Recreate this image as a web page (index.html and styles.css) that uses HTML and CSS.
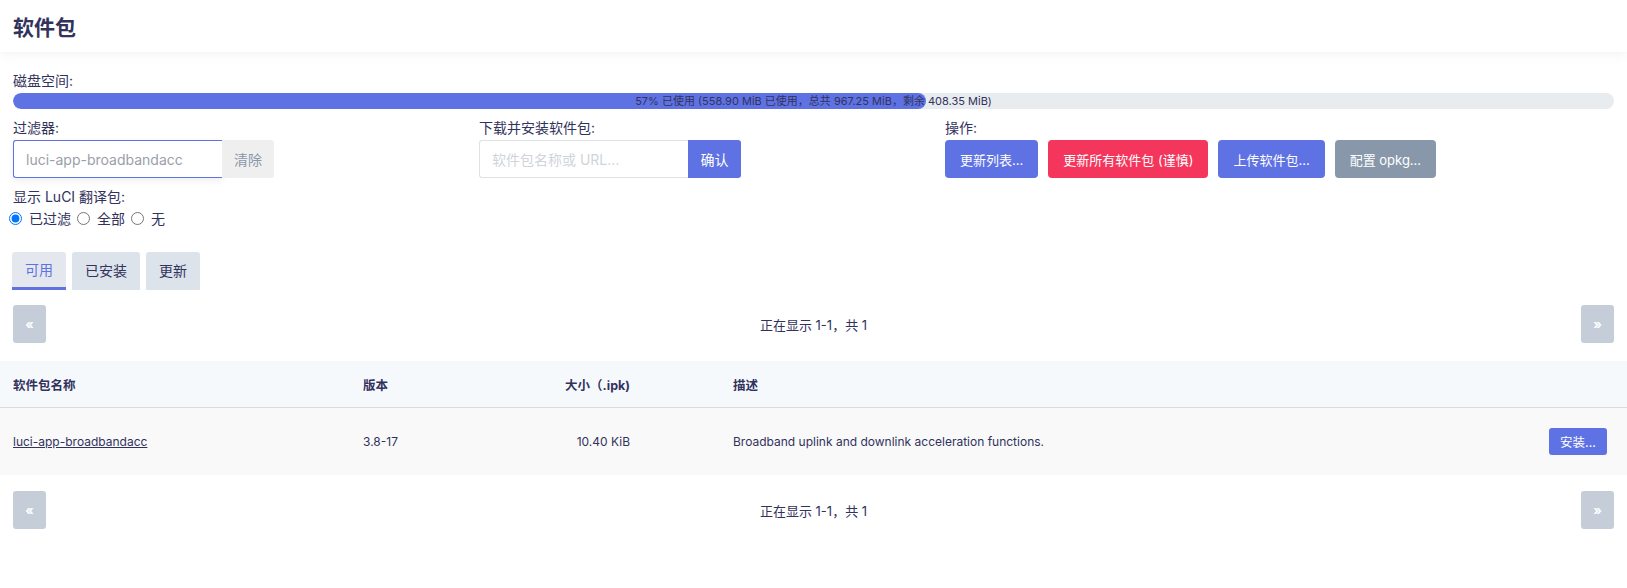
FILE: index.html
```html
<!DOCTYPE html>
<html lang="zh-CN">
<head>
    <meta charset="UTF-8">
    <meta name="viewport" content="width=device-width, initial-scale=1.0">
    <title>软件包</title>
    <link rel="stylesheet" href="styles.css">
</head>
<body>

<header class="topbar">
    <h2>软件包</h2>
</header>

<main class="content">
    <section class="disk">
        <div class="field-label">磁盘空间:</div>
        <div class="disk-bar">
            <div class="disk-fill" style="width: 57%"></div>
            <span class="disk-text">57% 已使用 (558.90 MiB 已使用，总共 967.25 MiB，剩余 408.35 MiB)</span>
        </div>
    </section>

    <section class="controls">
        <div class="control">
            <div class="field-label">过滤器:</div>
            <div class="input-group">
                <input type="text" class="text-input focused" placeholder="luci-app-broadbandacc">
                <button class="btn btn-clear">清除</button>
            </div>
        </div>
        <div class="control">
            <div class="field-label">下载并安装软件包:</div>
            <div class="input-group">
                <input type="text" class="text-input" placeholder="软件包名称或 URL...">
                <button class="btn btn-confirm">确认</button>
            </div>
        </div>
        <div class="control">
            <div class="field-label">操作:</div>
            <div class="actions">
                <button class="btn btn-primary">更新列表...</button>
                <button class="btn btn-danger">更新所有软件包 (谨慎)</button>
                <button class="btn btn-primary">上传软件包...</button>
                <button class="btn btn-neutral">配置 opkg...</button>
            </div>
        </div>
    </section>

    <section class="translations">
        <div class="field-label">显示 LuCI 翻译包:</div>
        <div class="radios">
            <label><input type="radio" name="i18n" checked>已过滤</label>
            <label><input type="radio" name="i18n">全部</label>
            <label><input type="radio" name="i18n">无</label>
        </div>
    </section>

    <ul class="tabs">
        <li class="tab active">可用</li>
        <li class="tab">已安装</li>
        <li class="tab">更新</li>
    </ul>

    <div class="pager">
        <button class="pager-btn">&laquo;</button>
        <span class="pager-text">正在显示 1-1，共 1</span>
        <button class="pager-btn">&raquo;</button>
    </div>
</main>

<table class="packages">
    <thead>
        <tr>
            <th class="col-name">软件包名称</th>
            <th class="col-version">版本</th>
            <th class="col-size">大小（.ipk)</th>
            <th class="col-desc">描述</th>
            <th class="col-action"></th>
        </tr>
    </thead>
    <tbody>
        <tr>
            <td class="col-name"><a href="#">luci-app-broadbandacc</a></td>
            <td class="col-version">3.8-17</td>
            <td class="col-size">10.40 KiB</td>
            <td class="col-desc">Broadband uplink and downlink acceleration functions.</td>
            <td class="col-action"><button class="btn btn-install">安装...</button></td>
        </tr>
    </tbody>
</table>

<div class="pager pager-bottom">
    <button class="pager-btn">&laquo;</button>
    <span class="pager-text">正在显示 1-1，共 1</span>
    <button class="pager-btn">&raquo;</button>
</div>

</body>
</html>
```

FILE: styles.css
```css
body {
    margin: 0;
    font-family: Inter, "Noto Sans CJK SC", sans-serif;
    font-size: 14px;
    color: #32325d;
    background-color: #ffffff;
}
.topbar {
    height: 52px;
    display: flex;
    align-items: center;
    padding: 0 13px;
    box-shadow: 0 2px 10px rgba(136, 152, 170, 0.12);
}
.topbar h2 {
    margin: 0;
    font-size: 21px;
    font-weight: 700;
    color: #32325d;
}
.content {
    padding: 19px 13px 0;
}
.field-label {
    line-height: 20px;
    font-size: 14px;
}
.disk-bar {
    position: relative;
    margin-top: 2px;
    height: 16px;
    border-radius: 8px;
    background-color: #e9ecef;
    overflow: hidden;
}
.disk-fill {
    height: 100%;
    background-color: #5e72e4;
    border-radius: 8px;
}
.disk-text {
    position: absolute;
    left: 0;
    right: 0;
    top: 0;
    text-align: center;
    font-size: 11px;
    line-height: 16px;
    color: #32325d;
}
.controls {
    display: grid;
    grid-template-columns: 466px 466px 1fr;
    margin-top: 9px;
}
.input-group {
    display: flex;
    margin-top: 2px;
    height: 38px;
}
.text-input {
    width: 209px;
    box-sizing: border-box;
    border: 1px solid #dee2e6;
    border-right: none;
    border-radius: 3px 0 0 3px;
    padding: 0 12px;
    font-family: inherit;
    font-size: 14px;
    color: #32325d;
    outline: none;
}
.text-input::placeholder {
    color: #d0d4da;
}
.text-input.focused {
    border-color: #5e72e4;
    box-shadow: 0 3px 6px rgba(50, 50, 93, 0.08);
}
.text-input.focused::placeholder {
    color: #9aa0a8;
}
.btn {
    border: none;
    font-family: inherit;
    cursor: pointer;
    color: #ffffff;
}
.btn-clear {
    width: 52px;
    background-color: #efefef;
    color: #8898aa;
    font-size: 14px;
    border-radius: 0 3px 3px 0;
}
.btn-confirm {
    width: 53px;
    background-color: #5e72e4;
    font-size: 14px;
    border-radius: 0 3px 3px 0;
}
.actions {
    display: flex;
    gap: 10px;
    margin-top: 2px;
}
.actions .btn {
    height: 38px;
    padding: 0 15px;
    font-size: 13px;
    border-radius: 4px;
}
.btn-primary {
    background-color: #5e72e4;
}
.btn-danger {
    background-color: #f5365c;
}
.btn-neutral {
    background-color: #8898aa;
}
.translations {
    margin-top: 9px;
}
.radios {
    display: flex;
    align-items: center;
    height: 20px;
    margin-top: 1px;
    margin-left: -4px;
}
.radios label {
    display: inline-flex;
    align-items: center;
    margin-right: 6px;
}
.radios input {
    width: 13px;
    height: 13px;
    margin: 0 7px 0 0;
}
.tabs {
    display: flex;
    gap: 6px;
    list-style: none;
    margin: 24px 0 0 -1px;
    padding: 0;
}
.tab {
    height: 38px;
    line-height: 38px;
    padding: 0 13px;
    box-sizing: border-box;
    background-color: #dce3ea;
    border-radius: 3px 3px 0 0;
    color: #32325d;
}
.tab.active {
    background-color: #e4e8ee;
    color: #5e72e4;
    border-bottom: 3px solid #5e72e4;
    line-height: 36px;
}
.pager {
    display: flex;
    justify-content: space-between;
    align-items: center;
    margin-top: 15px;
    height: 38px;
}
.pager-btn {
    width: 33px;
    height: 38px;
    border: none;
    border-radius: 3px;
    background-color: #c5ced8;
    color: #ffffff;
    font-size: 13px;
    font-weight: 700;
    font-family: inherit;
}
.pager-text {
    font-size: 13px;
}
.packages {
    width: 100%;
    margin-top: 18px;
    border-collapse: collapse;
    font-size: 12px;
}
.packages th {
    height: 46px;
    background-color: #f6f9fc;
    border-bottom: 1px solid #dcdcdc;
    font-size: 12.5px;
    font-weight: 700;
    text-align: left;
    padding: 0 13px;
}
.packages td {
    height: 67px;
    background-color: #f9f9f9;
    padding: 0 13px;
}
.packages a {
    color: #32325d;
}
.col-name {
    width: 324px;
}
.col-version {
    width: 154px;
}
.packages .col-size {
    width: 87px;
    text-align: right;
}
.packages .col-desc {
    padding-left: 90px;
}
.packages .col-action {
    text-align: right;
    padding-right: 20px;
}
.btn-install {
    width: 58px;
    height: 27px;
    background-color: #5e72e4;
    border-radius: 3px;
    font-size: 12.5px;
}
.pager-bottom {
    margin-top: 16px;
    padding: 0 13px;
}
```
